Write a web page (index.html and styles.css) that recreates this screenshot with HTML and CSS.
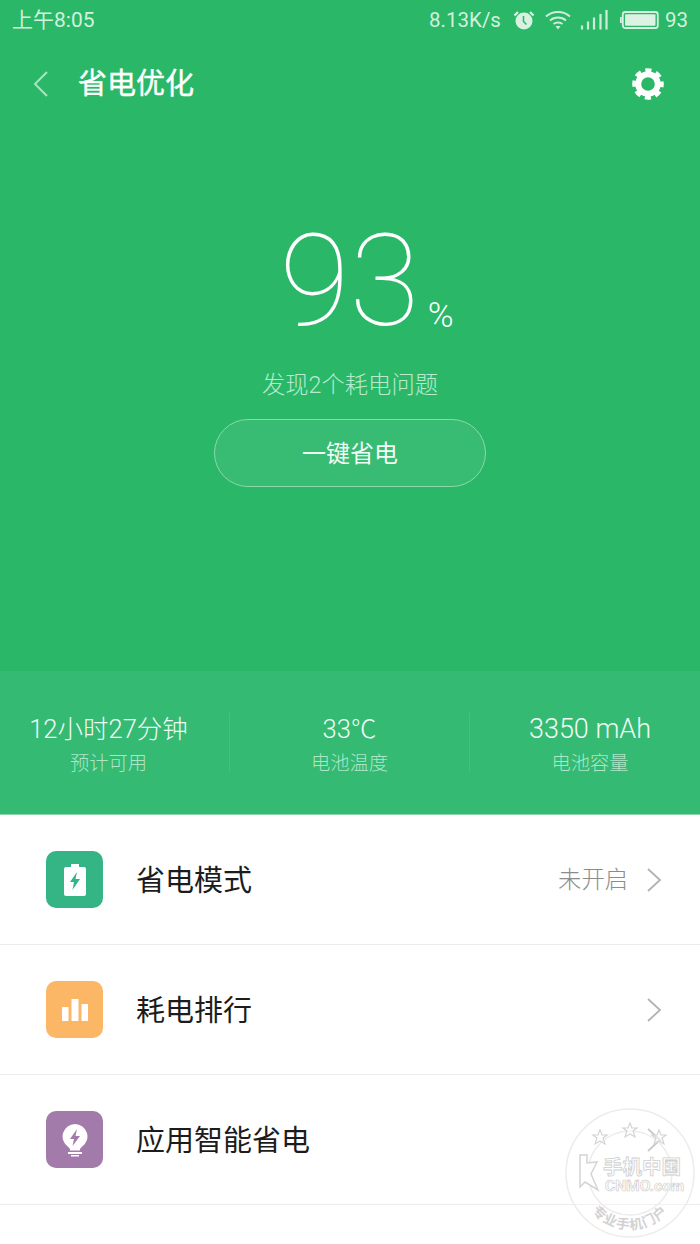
FILE: index.html
```html
<!DOCTYPE html>
<html lang="zh-CN">
<head>
<meta charset="utf-8">
<title>省电优化</title>
<link rel="stylesheet" href="styles.css">
</head>
<body>
<div class="screen">
  <section class="hero">
    <div class="status">
      <span class="time">上午8:05</span>
      <div class="status-right">
        <span class="speed">8.13K/s</span>
        <svg class="alarm" width="22" height="20" viewBox="0 0 22 20"><circle cx="11" cy="11" r="8.500" fill="#d9f1e0"/><path d="M10.500 6v5.500l3 3" fill="none" stroke="#2ab868" stroke-width="1.500"/><path d="M1.500 5.500 5 2M20.500 5.500 17 2" stroke="#d9f1e0" stroke-width="2.400" fill="none"/></svg>
        <svg class="wifi" width="26" height="20" viewBox="0 0 26 20"><path d="M1 6.500c6.500-6 17.500-6 24 0M5 10.500c4.500-4 11.500-4 16 0M8.500 14c2.500-2 6.500-2 9 0" fill="none" stroke="#cfeeda" stroke-width="1.800"/><path d="M13 19.500l-2.500-3.500h5z" fill="#cfeeda"/></svg>
        <svg class="signal" width="28" height="20" viewBox="0 0 28 20"><path d="M2 19.500v-4M8 19.500v-8M14 19.500V7.500M20.500 19.500V4M26.500 19.500V0" stroke="#cfeeda" stroke-width="2.200" fill="none"/></svg>
        <svg class="battery" width="39" height="20" viewBox="0 0 39 20"><rect x="2.800" y="2" width="35" height="16" rx="2.500" fill="none" stroke="#d9f1e0" stroke-width="1.800"/><rect x="5" y="4.200" width="30.500" height="11.600" rx="1" fill="#dcf2e3"/><rect x="0" y="7" width="1.800" height="6" fill="#d9f1e0"/></svg>
        <span class="level">93</span>
      </div>
    </div>
    <header class="nav">
      <svg class="back" width="18" height="28" viewBox="0 0 18 28"><path d="M15 2 3 14l12 12" fill="none" stroke="#a9e3bf" stroke-width="2"/></svg>
      <h1 class="title">省电优化</h1>
      <svg class="gear" width="32" height="32" viewBox="0 0 32 32"><circle cx="16" cy="16" r="9.800" fill="none" stroke="#fff" stroke-width="6"/><circle cx="16" cy="16" r="13.500" fill="none" stroke="#fff" stroke-width="4.500" stroke-dasharray="6 4.600" stroke-dashoffset="3"/></svg>
    </header>
    <div class="score">
      <span class="score-num">93</span><span class="score-unit">%</span>
    </div>
    <p class="issue">发现2个耗电问题</p>
    <button class="cta">一键省电</button>
  </section>

  <section class="stats">
    <div class="stat stat-first">
      <div class="stat-val">12小时27分钟</div>
      <div class="stat-label">预计可用</div>
    </div>
    <div class="stat">
      <div class="stat-val">33℃</div>
      <div class="stat-label">电池温度</div>
    </div>
    <div class="stat stat-last">
      <div class="stat-val stat-val-wide">3350 mAh</div>
      <div class="stat-label">电池容量</div>
    </div>
  </section>

  <ul class="list">
    <li class="row">
      <span class="tile tile-green">
        <svg width="24" height="34" viewBox="0 0 24 34"><path fill="#fff" d="M8 1h8v3h5a2 2 0 0 1 2 2v25a2 2 0 0 1-2 2H3a2 2 0 0 1-2-2V6a2 2 0 0 1 2-2h5z"/><path fill="#35b585" d="M14 9l-7 10h4l-1.500 8L17 16h-4.500z"/></svg>
      </span>
      <span class="row-name">省电模式</span>
      <span class="row-val">未开启</span>
      <svg class="chev" width="16" height="26" viewBox="0 0 16 26"><path d="M2 2l12 11L2 24" fill="none" stroke="#b2b2b2" stroke-width="1.800"/></svg>
    </li>
    <li class="row">
      <span class="tile tile-orange">
        <svg width="28" height="24" viewBox="0 0 28 24"><path fill="#fff" d="M1 9h6.500v14H1zM10.500 1h7v22h-7zM20.500 6H27v17h-6.500z"/></svg>
      </span>
      <span class="row-name">耗电排行</span>
      <svg class="chev" width="16" height="26" viewBox="0 0 16 26"><path d="M2 2l12 11L2 24" fill="none" stroke="#b2b2b2" stroke-width="1.800"/></svg>
    </li>
    <li class="row">
      <span class="tile tile-purple">
        <svg width="26" height="34" viewBox="0 0 26 34"><path fill="#fff" d="M13 1a12.500 12.500 0 0 1 7 22.800c-1.300 1-2 2-2.200 3.700H8.200C8 25.800 7.300 24.800 6 23.800A12.500 12.500 0 0 1 13 1z"/><path fill="#fff" d="M6 29h14v2H6zM9 32h8v1.500H9z"/><path fill="#a27bab" d="M15 6l-7 10h4l-1.500 7L18 13h-4.500z"/></svg>
      </span>
      <span class="row-name">应用智能省电</span>
      <svg class="chev" width="16" height="26" viewBox="0 0 16 26"><path d="M2 2l12 11L2 24" fill="none" stroke="#b2b2b2" stroke-width="1.800"/></svg>
    </li>
  </ul>

  <div class="mark">
    <svg class="mark-art" width="130" height="130" viewBox="0 0 130 130">
      <circle cx="65" cy="65" r="64" fill="rgba(255,255,255,.3)" stroke="#ececec" stroke-width="1.500"/>
      <circle cx="65" cy="65" r="42" fill="none" stroke="#ececec" stroke-width="1.500"/>
      <path d="M35 22l2 5h5l-4 3 2 6-5-3-5 3 2-6-4-3h5zM65 15l2 5h5l-4 3 2 6-5-3-5 3 2-6-4-3h5zM94 22l2 5h5l-4 3 2 6-5-3-5 3 2-6-4-3h5z" fill="#fff" fill-opacity=".5" stroke="#d4d4d4" stroke-width="1.200"/>
      <path d="M15 47h7v8l10-1-6 12 7 16-13-8-5 5z" fill="#fff" stroke="#d4d4d4" stroke-width="1.500"/>
      <path id="markArc" d="M24 100a50 50 0 0 0 82 0" fill="none"/>
      <text class="mark-foot"><textPath href="#markArc" startOffset="50%" text-anchor="middle">专业手机门户</textPath></text>
    </svg>
    <span class="mark-cn">手机中国</span>
    <span class="mark-en">CNMO.com</span>
  </div>
</div>
</body>
</html>
```
FILE: styles.css
```css
* { box-sizing: border-box; }
html, body { margin: 0; padding: 0; }
body {
  width: 700px;
  height: 1244px;
  overflow: hidden;
  background: #fff;
  font-family: "Roboto", "Noto Sans CJK SC", sans-serif;
}
.screen { position: relative; width: 700px; height: 1244px; overflow: hidden; }

.hero {
  height: 671px;
  background: #2ab868;
  display: flex;
  flex-direction: column;
  align-items: center;
}
.status {
  width: 100%;
  height: 40px;
  padding: 0 12px;
  display: flex;
  justify-content: space-between;
  align-items: center;
  color: #d4f0de;
  font-size: 20.500px;
  font-weight: 400;
}
.time { font-size: 21px; line-height: 41px; height: 40px; }
.status-right { display: flex; align-items: center; }
.speed { margin-right: 12px; }
.alarm { margin-right: 10px; }
.wifi { margin-right: 9px; }
.signal { margin-right: 12px; }
.battery { margin-right: 6px; }
.nav {
  width: 100%;
  height: 88px;
  padding: 0 36px 0 32px;
  display: flex;
  align-items: center;
}
.title {
  margin: 0 0 0 28px;
  flex: 1;
  color: #fff;
  font-size: 29px;
  font-weight: 400;
  line-height: 1;
  -webkit-text-stroke: 0.4px #fff;
}
.score {
  margin-top: 83px;
  height: 140px;
  display: flex;
  align-items: flex-end;
  color: #fff;
  padding-left: 33px;
}
.score-num {
  font-size: 128px;
  font-weight: 100;
  line-height: 140px;
}
.score-unit {
  font-size: 35px;
  font-weight: 300;
  line-height: 40px;
  margin-left: 8px;
  margin-bottom: 15px;
}
.issue {
  margin: 18px 0 0;
  color: #b8ead0;
  font-size: 23.300px;
  line-height: 32px;
  font-weight: 300;
}
.cta {
  margin-top: 18px;
  padding: 0 0 4px;
  width: 272px;
  height: 68px;
  border-radius: 34px;
  border: 1px solid #8bd8ac;
  background: #38bb72;
  color: #f2fbf5;
  font: 400 24px "Roboto", "Noto Sans CJK SC", sans-serif;
}

.stats {
  height: 144px;
  background: #34ba73;
  border-bottom: 1px solid #8ed6ab;
  padding-top: 42px;
  display: grid;
  grid-template-columns: 230px 240px 230px;
  align-items: start;
}
.stat {
  height: 60px;
  text-align: center;
  border-right: 1px solid #46c081;
}
.stat-first { padding-right: 12px; }
.stat-last { border-right: 0; padding-left: 10px; }
.stat-val {
  color: #f0faf4;
  font-size: 25.500px;
  font-weight: 300;
  line-height: 32px;
}
.stat-val-wide { font-size: 27px; }
.stat-label {
  margin-top: 4px;
  color: #aee5c6;
  font-size: 19.300px;
  font-weight: 300;
  line-height: 30px;
}

.list { margin: 0; padding: 0; list-style: none; }
.row {
  height: 130px;
  padding: 0 38px 0 46px;
  border-bottom: 1px solid #ececec;
  display: flex;
  align-items: center;
}
.tile {
  width: 57px;
  height: 57px;
  border-radius: 10px;
  display: flex;
  align-items: center;
  justify-content: center;
}
.tile-green { background: #35b585; }
.tile-orange { background: #fbb666; }
.tile-purple { background: #a27bab; }
.row-name {
  margin-left: 33px;
  margin-bottom: 4px;
  flex: 1;
  color: #1c1c1c;
  font-size: 29px;
  font-weight: 400;
}
.row-val {
  margin-right: 18px;
  margin-bottom: 4px;
  color: #8c8c8c;
  font-size: 23.300px;
  font-weight: 300;
}

.mark {
  position: absolute;
  left: 565px;
  top: 1108px;
  width: 130px;
  height: 130px;
  color: #fff;
  text-align: center;
}
.mark-art { position: absolute; left: 0; top: 0; }
.mark-cn {
  position: absolute;
  left: 38px;
  top: 49px;
  font-size: 19.500px;
  font-weight: 700;
  line-height: 22px;
  white-space: nowrap;
  -webkit-text-stroke: 0.8px #cfcfcf;
}
.mark-en {
  position: absolute;
  left: 40px;
  top: 70px;
  font-size: 15.500px;
  font-weight: 700;
  line-height: 16px;
  -webkit-text-stroke: 0.7px #cfcfcf;
}
.mark-foot {
  font-size: 13.500px;
  font-weight: 700;
  letter-spacing: 1px;
  fill: #d2d2d2;
}
```
